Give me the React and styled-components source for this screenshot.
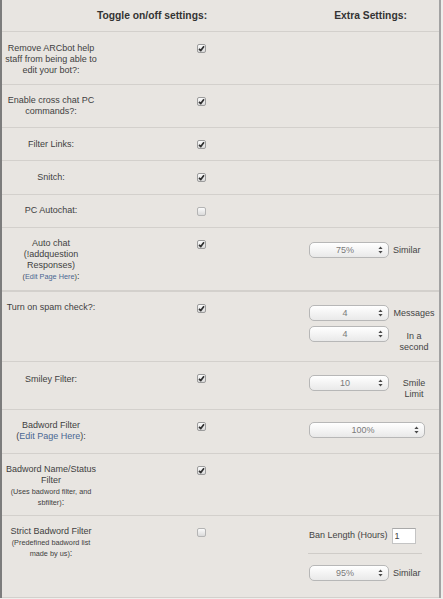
import React from 'react';
import styled, { createGlobalStyle } from 'styled-components';

const GlobalStyle = createGlobalStyle`
  html, body {
    margin: 0;
    padding: 0;
    background: #efeeec;
  }
  body {
    font-family: "Liberation Sans", Arial, sans-serif;
  }
`;

const Panel = styled.div`
  width: 437px;
  border-left: 2px solid #7c7c7c;
  border-right: 2px solid #a2a2a2;
  background: #e8e5e1;
  color: #3f3f3f;
  font-size: 9px;
`;

const Row = styled.div`
  display: grid;
  grid-template-columns: 98px 202px 137px;
  align-items: start;
  height: ${p => p.$h}px;
  box-sizing: border-box;
  border-bottom: ${p => (p.$thick ? 2 : 1)}px solid #d3d0cc;
`;

const HeaderRow = styled(Row)`
  align-items: center;
`;

const HeaderCell = styled.div`
  grid-column: ${p => p.$span || 'auto'};
  text-align: center;
  font-size: 10.3px;
  font-weight: 700;
  color: #333;
`;

const Label = styled.div`
  padding-top: ${p => p.$pt ?? 11}px;
  text-align: center;
  line-height: 11px;
`;

const Small = styled.span`
  font-size: ${p => p.$size || 7.3}px;
`;

const Link = styled.a`
  color: #4a6793;
  text-decoration: none;
`;

const CheckCell = styled.div`
  display: flex;
  justify-content: center;
  padding-top: 12px;
`;

const Box = styled.span`
  width: 9px;
  height: 9px;
  box-sizing: border-box;
  border: 1px solid ${p => (p.$on ? '#9c9c9c' : '#b4b4b4')};
  border-radius: 2px;
  background: linear-gradient(#fbfbfb, #dadada);
  display: flex;
  align-items: center;
  justify-content: center;
`;

const Extra = styled.div`
  padding: ${p => p.$pt ?? 12}px 0 0 7px;
  display: flex;
  flex-direction: column;
  gap: ${p => p.$gap ?? 5}px;
`;

const Line = styled.div`
  display: flex;
  align-items: ${p => (p.$top ? 'flex-start' : 'center')};
  gap: 4px;
`;

const SelectWrap = styled.div`
  position: relative;
  width: ${p => p.$w}px;
  height: 16px;
  flex: none;
`;

const Select = styled.select`
  appearance: none;
  width: 100%;
  height: 16px;
  margin: 0;
  box-sizing: border-box;
  border: 1px solid #b7b7b7;
  border-radius: 5px;
  background: linear-gradient(#ffffff, #e9e9e9);
  padding: 0 8px 0 0;
  font-family: "Liberation Sans", Arial, sans-serif;
  font-size: 9px;
  color: #7a7a7a;
  text-align: center;
  text-align-last: center;
  outline: none;
`;

const Arrows = styled.svg`
  position: absolute;
  right: 6px;
  top: 4px;
  pointer-events: none;
`;

const SideLabel = styled.div`
  width: ${p => (p.$center ? '42px' : 'auto')};
  text-align: ${p => (p.$center ? 'center' : 'left')};
  padding-top: ${p => p.$pt || 0}px;
  line-height: 11px;
  color: #444;
`;

const TextInput = styled.input`
  width: 24px;
  height: 16px;
  box-sizing: border-box;
  margin: 2px 0 0 0;
  padding: 0 2px;
  border: 1px solid #c4c4c4;
  border-top-color: #a9a9a9;
  background: #fff;
  font-family: "Liberation Sans", Arial, sans-serif;
  font-size: 9px;
  color: #444;
  outline: none;
`;

const Divider = styled.div`
  width: 114px;
  height: 1px;
  margin: 9px 0 11px -1px;
  background: #cfccc8;
`;

const Checkbox = ({ on }) => (
  <Box $on={on}>
    {on && (
      <svg width="7" height="7" viewBox="0 0 7 7">
        <path d="M1 3.8 L2.8 5.6 L6 1.2" fill="none" stroke="#2e2e2e" strokeWidth="1.7" strokeLinejoin="round" />
      </svg>
    )}
  </Box>
);

const FakeSelect = ({ w = 80, value }) => (
  <SelectWrap $w={w}>
    <Select defaultValue={value}>
      <option>{value}</option>
    </Select>
    <Arrows width="5" height="8" viewBox="0 0 5 8">
      <path d="M2.5 0.5 L4.6 3 L0.4 3 Z M2.5 7.5 L4.6 5 L0.4 5 Z" fill="#4a4a4a" />
    </Arrows>
  </SelectWrap>
);

const EditLink = ({ size }) => (
  <Small $size={size}>
    (<Link href="#">Edit Page Here</Link>)
  </Small>
);

export default function App() {
  return (
    <>
      <GlobalStyle />
      <Panel>
        <HeaderRow $h={32}>
          <HeaderCell $span="1 / span 2">Toggle on/off settings:</HeaderCell>
          <HeaderCell>Extra Settings:</HeaderCell>
        </HeaderRow>

        <Row $h={53}>
          <Label>
            Remove ARCbot help<br />staff from being able to<br />edit your bot?:
          </Label>
          <CheckCell><Checkbox on /></CheckCell>
          <div />
        </Row>

        <Row $h={43}>
          <Label $pt={10}>Enable cross chat PC<br />commands?:</Label>
          <CheckCell><Checkbox on /></CheckCell>
          <div />
        </Row>

        <Row $h={33}>
          <Label>Filter Links:</Label>
          <CheckCell><Checkbox on /></CheckCell>
          <div />
        </Row>

        <Row $h={34}>
          <Label>Snitch:</Label>
          <CheckCell><Checkbox on /></CheckCell>
          <div />
        </Row>

        <Row $h={33}>
          <Label $pt={10}>PC Autochat:</Label>
          <CheckCell><Checkbox /></CheckCell>
          <div />
        </Row>

        <Row $h={64} $thick>
          <Label $pt={10}>
            Auto chat<br />(!addquestion<br />Responses)<br />
            <EditLink />:
          </Label>
          <CheckCell><Checkbox on /></CheckCell>
          <Extra $pt={14}>
            <Line>
              <FakeSelect value="75%" />
              <SideLabel>Similar</SideLabel>
            </Line>
          </Extra>
        </Row>

        <Row $h={70}>
          <Label $pt={10}>Turn on spam check?:</Label>
          <CheckCell><Checkbox on /></CheckCell>
          <Extra $pt={13}>
            <Line>
              <FakeSelect value="4" />
              <SideLabel $center>Messages</SideLabel>
            </Line>
            <Line $top>
              <FakeSelect value="4" />
              <SideLabel $center $pt={5}>In a<br />second</SideLabel>
            </Line>
          </Extra>
        </Row>

        <Row $h={48}>
          <Label $pt={12}>Smiley Filter:</Label>
          <CheckCell><Checkbox on /></CheckCell>
          <Extra $pt={13}>
            <Line $top>
              <FakeSelect value="10" />
              <SideLabel $center $pt={3}>Smile<br />Limit</SideLabel>
            </Line>
          </Extra>
        </Row>

        <Row $h={44}>
          <Label $pt={10}>
            Badword Filter<br />
            <EditLink size={9} />:
          </Label>
          <CheckCell><Checkbox on /></CheckCell>
          <Extra $pt={12}>
            <Line>
              <FakeSelect w={116} value="100%" />
            </Line>
          </Extra>
        </Row>

        <Row $h={62}>
          <Label $pt={10}>
            Badword Name/Status<br />Filter<br />
            <Small>(Uses badword filter, and<br />sbfilter)</Small>:
          </Label>
          <CheckCell><Checkbox on /></CheckCell>
          <div />
        </Row>

        <Row $h={82}>
          <Label $pt={10}>
            Strict Badword Filter<br />
            <Small>(Predefined badword list<br />made by us)</Small>:
          </Label>
          <CheckCell><Checkbox /></CheckCell>
          <Extra $pt={10} $gap={0}>
            <Line>
              <SideLabel>Ban Length (Hours)</SideLabel>
              <TextInput defaultValue="1" />
            </Line>
            <Divider />
            <Line>
              <FakeSelect value="95%" />
              <SideLabel>Similar</SideLabel>
            </Line>
          </Extra>
        </Row>
      </Panel>
    </>
  );
}
